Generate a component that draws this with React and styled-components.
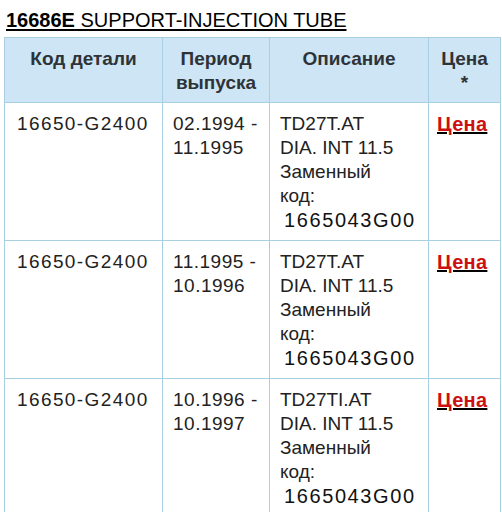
import styled, { createGlobalStyle } from "styled-components";

const GlobalStyle = createGlobalStyle`
  body {
    margin: 0;
    background: #fff;
    font-family: "Liberation Sans", Arial, sans-serif;
  }
`;

const rows = [
  { part: "16650-G2400", from: "02.1994 -", to: "11.1995", engine: "TD27T.AT" },
  { part: "16650-G2400", from: "11.1995 -", to: "10.1996", engine: "TD27T.AT" },
  { part: "16650-G2400", from: "10.1996 -", to: "10.1997", engine: "TD27TI.AT" },
];

export default function App() {
  return (
    <Page>
      <GlobalStyle />
      <Title>
        <b>16686E</b> SUPPORT-INJECTION TUBE
      </Title>
      <Table>
        <colgroup>
          <col style={{ width: 158 }} />
          <col style={{ width: 107 }} />
          <col style={{ width: 159 }} />
          <col style={{ width: 72 }} />
        </colgroup>
        <thead>
          <tr>
            <Th>Код детали</Th>
            <Th>Период<br />выпуска</Th>
            <Th>Описание</Th>
            <Th>Цена<br />*</Th>
          </tr>
        </thead>
        <tbody>
          {rows.map((row, i) => (
            <tr key={i}>
              <Td $pad="12px">
                <PartNo>{row.part}</PartNo>
              </Td>
              <Td>
                <Dates>{row.from}<br />{row.to}</Dates>
              </Td>
              <Td>
                {row.engine}<br />
                DIA. INT 11.5<br />
                Заменный<br />
                код:<br />
                <Code>1665043G00</Code>
              </Td>
              <Td $pad="8px">
                <PriceLink href="#">Цена</PriceLink>
              </Td>
            </tr>
          ))}
        </tbody>
      </Table>
    </Page>
  );
}

const Page = styled.div`
  width: 502px;
  height: 512px;
  overflow: hidden;
  padding: 8px 0 0 4px;
  box-sizing: border-box;
`;

const Title = styled.div`
  font-size: 20px;
  line-height: 24px;
  color: #000;
  text-decoration: underline;
  text-underline-offset: 2px;
  padding-left: 2px;
  margin-bottom: 5px;

  b {
    font-weight: bold;
  }
`;

const Table = styled.table`
  border-collapse: collapse;
  table-layout: fixed;
  width: 497px;
  border: 1px solid #a9cfe3;
`;

const Th = styled.th`
  background: #cde5f4;
  border: 1px solid #a9cfe3;
  color: #2e3338;
  font-size: 19px;
  font-weight: bold;
  line-height: 24px;
  padding: 9px 4px 7px;
  text-align: center;
  vertical-align: top;
`;

const Td = styled.td`
  border: 1px solid #a9cfe3;
  color: #222;
  font-size: 19px;
  line-height: 24px;
  padding: 9px 8px 7px ${(p) => p.$pad || "10px"};
  vertical-align: top;
  height: 120px;
  box-sizing: content-box;
`;

const PartNo = styled.span`
  letter-spacing: 1.4px;
`;

const Dates = styled.span`
  letter-spacing: 0.5px;
`;

const Code = styled.span`
  display: inline-block;
  padding-left: 4px;
  font-size: 20px;
  letter-spacing: 1.6px;
  color: #111;
`;

const PriceLink = styled.a`
  color: #cc1111;
  font-size: 20px;
  font-weight: bold;
  letter-spacing: 0.3px;
  text-decoration: underline;
  text-decoration-color: #000;
`;
